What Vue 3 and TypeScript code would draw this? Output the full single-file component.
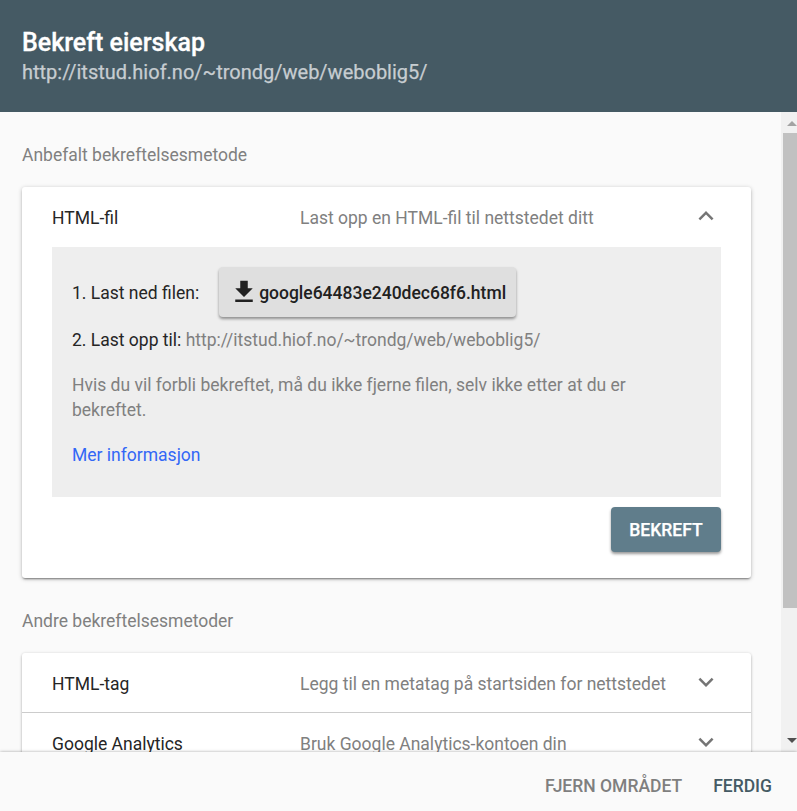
<script setup lang="ts">
interface Method {
  name: string
  description: string
}

const siteUrl: string = 'http://itstud.hiof.no/~trondg/web/weboblig5/'
const otherMethods: Method[] = [
  { name: 'HTML-tag', description: 'Legg til en metatag på startsiden for nettstedet' },
  { name: 'Google Analytics', description: 'Bruk Google Analytics-kontoen din' },
]
</script>

<template>
  <div class="dialog">
    <header class="header">
      <h1 class="title">Bekreft eierskap</h1>
      <div class="subtitle">{{ siteUrl }}</div>
    </header>

    <div class="body">
      <main class="content">
        <h2 class="section-title">Anbefalt bekreftelsesmetode</h2>
        <section class="card recommended">
          <div class="row">
            <span class="name">HTML-fil</span>
            <span class="description">Last opp en HTML-fil til nettstedet ditt</span>
            <svg class="chevron" viewBox="0 0 24 24"><path d="M12 8l-6 6 1.41 1.41L12 10.83l4.59 4.58L18 14z" /></svg>
          </div>
          <div class="panel">
            <div class="step download-step">
              <span class="step-label">1. Last ned filen:</span>
              <button class="download">
                <svg viewBox="0 0 24 24"><path d="M19 9h-4V3H9v6H5l7 7 7-7zM5 18v2h14v-2H5z" /></svg>
                <span>google64483e240dec68f6.html</span>
              </button>
            </div>
            <div class="step upload-step">2. Last opp til: <span class="muted">{{ siteUrl }}</span></div>
            <p class="hint">Hvis du vil forbli bekreftet, må du ikke fjerne filen, selv ikke etter at du er bekreftet.</p>
            <a class="more">Mer informasjon</a>
          </div>
          <div class="actions"><button class="verify">BEKREFT</button></div>
        </section>

        <h2 class="section-title other-title">Andre bekreftelsesmetoder</h2>
        <section class="card">
          <div v-for="method in otherMethods" :key="method.name" class="row other-row">
            <span class="name">{{ method.name }}</span>
            <span class="description">{{ method.description }}</span>
            <svg class="chevron" viewBox="0 0 24 24"><path d="M7.41 8.59L12 13.17l4.59-4.58L18 10l-6 6-6-6z" /></svg>
          </div>
        </section>
      </main>
      <div class="scrollbar">
        <svg class="arrow up" viewBox="0 0 10 5"><path d="M5 0L10 5H0z" /></svg>
        <div class="thumb"></div>
        <svg class="arrow down" viewBox="0 0 10 5"><path d="M0 0h10L5 5z" /></svg>
      </div>
    </div>

    <footer class="footer">
      <button class="flat remove">FJERN OMRÅDET</button>
      <button class="flat done">FERDIG</button>
    </footer>
  </div>
</template>

<style>
body {
  margin: 0;
  overflow: hidden;
}
</style>

<style scoped>
.dialog {
  display: flex;
  flex-direction: column;
  width: 797px;
  height: 811px;
  overflow: hidden;
  background: #fafafa;
  color: #252525;
  font-family: Roboto, sans-serif;
  font-size: 17.5px;
  font-weight: 400;
}
.header {
  flex: none;
  height: 112px;
  box-sizing: border-box;
  padding: 28px 22px 0;
  background: #455a64;
}
.title {
  margin: 0;
  color: #fff;
  font-size: 25px;
  font-weight: 500;
  line-height: 30px;
  -webkit-text-stroke: 0.3px #fff;
}
.subtitle {
  color: #c7cdd1;
  font-size: 20px;
  line-height: 28px;
  -webkit-text-stroke: 0.25px #c7cdd1;
}
.body {
  display: flex;
  flex: none;
  height: 640px;
  overflow: hidden;
}
.content {
  width: 729px;
  padding: 31px 30px 0 22px;
}
.section-title {
  margin: 0 0 19px;
  color: #808080;
  font-size: 17.5px;
  font-weight: 400;
  line-height: 25px;
}
.other-title {
  margin-top: 31px;
}
.card {
  background: #fff;
  border-radius: 3px;
  box-shadow: 0 2px 3px rgba(0, 0, 0, 0.24), 0 0 3px rgba(0, 0, 0, 0.12);
}
.recommended {
  height: 391px;
  box-shadow: 0 2px 2px -1px rgba(0, 0, 0, 0.4), 0 1px 4px rgba(0, 0, 0, 0.26);
}
.row {
  display: flex;
  align-items: center;
  height: 60px;
  box-sizing: border-box;
  padding: 2px 30px 0;
}
.name {
  width: 248px;
}
.description {
  flex: 1;
  color: #808080;
}
.chevron {
  width: 30px;
  height: 30px;
  margin-bottom: 4px;
  fill: #757575;
}
.other-row:not(:last-child) {
  border-bottom: 1px solid #ccc;
}
.panel {
  height: 250px;
  box-sizing: border-box;
  margin: 0 30px;
  padding: 20px 20px 0;
  background: #eee;
}
.download-step {
  display: flex;
  align-items: center;
  gap: 20px;
  height: 50px;
}
.step-label {
  padding-top: 2px;
}
button {
  border: 0;
  font-family: inherit;
  font-size: 17.5px;
  font-weight: 500;
  white-space: nowrap;
}
.download {
  display: flex;
  align-items: center;
  width: 297px;
  height: 50px;
  padding: 0 10px;
  border-radius: 4px;
  background: #dfdfdf;
  color: #212121;
  box-shadow: 0 2px 3px rgba(0, 0, 0, 0.4);
}
.download svg {
  flex: none;
  width: 30px;
  height: 30px;
  fill: #212121;
}
.download span {
  padding-top: 2px;
}
.upload-step {
  margin-top: 11px;
  line-height: 25px;
}
.muted {
  color: #808080;
}
.hint {
  margin: 20px 0;
  color: #808080;
  line-height: 25px;
}
.more {
  color: #3367f6;
  line-height: 25px;
}
.actions {
  display: flex;
  justify-content: flex-end;
  padding: 10px 30px 0;
}
.verify {
  width: 110px;
  height: 45px;
  padding: 0;
  border-radius: 4px;
  background: #607d8b;
  color: #fff;
  box-shadow: 0 2px 3px rgba(0, 0, 0, 0.4);
  -webkit-text-stroke: 0.25px #fff;
}
.scrollbar {
  display: flex;
  flex-direction: column;
  width: 14px;
  padding: 9px 0 9px 2px;
  background: #f1f1f1;
}
.arrow {
  display: block;
  flex: none;
  width: 10px;
  height: 5px;
  margin-left: 4px;
}
.up {
  fill: #a3a3a3;
}
.down {
  margin-top: auto;
  fill: #505050;
}
.thumb {
  height: 475px;
  margin-top: 7px;
  background: #c1c1c1;
}
.footer {
  position: relative;
  display: flex;
  flex: 1;
  align-items: center;
  justify-content: flex-end;
  gap: 31px;
  padding: 9px 25px 0 0;
  background: #fafafa;
  box-shadow: 0 0 3px rgba(0, 0, 0, 0.35);
}
.flat {
  padding: 0;
  background: none;
}
.remove {
  color: #7f7f7f;
}
.done {
  color: #455a64;
}
</style>
